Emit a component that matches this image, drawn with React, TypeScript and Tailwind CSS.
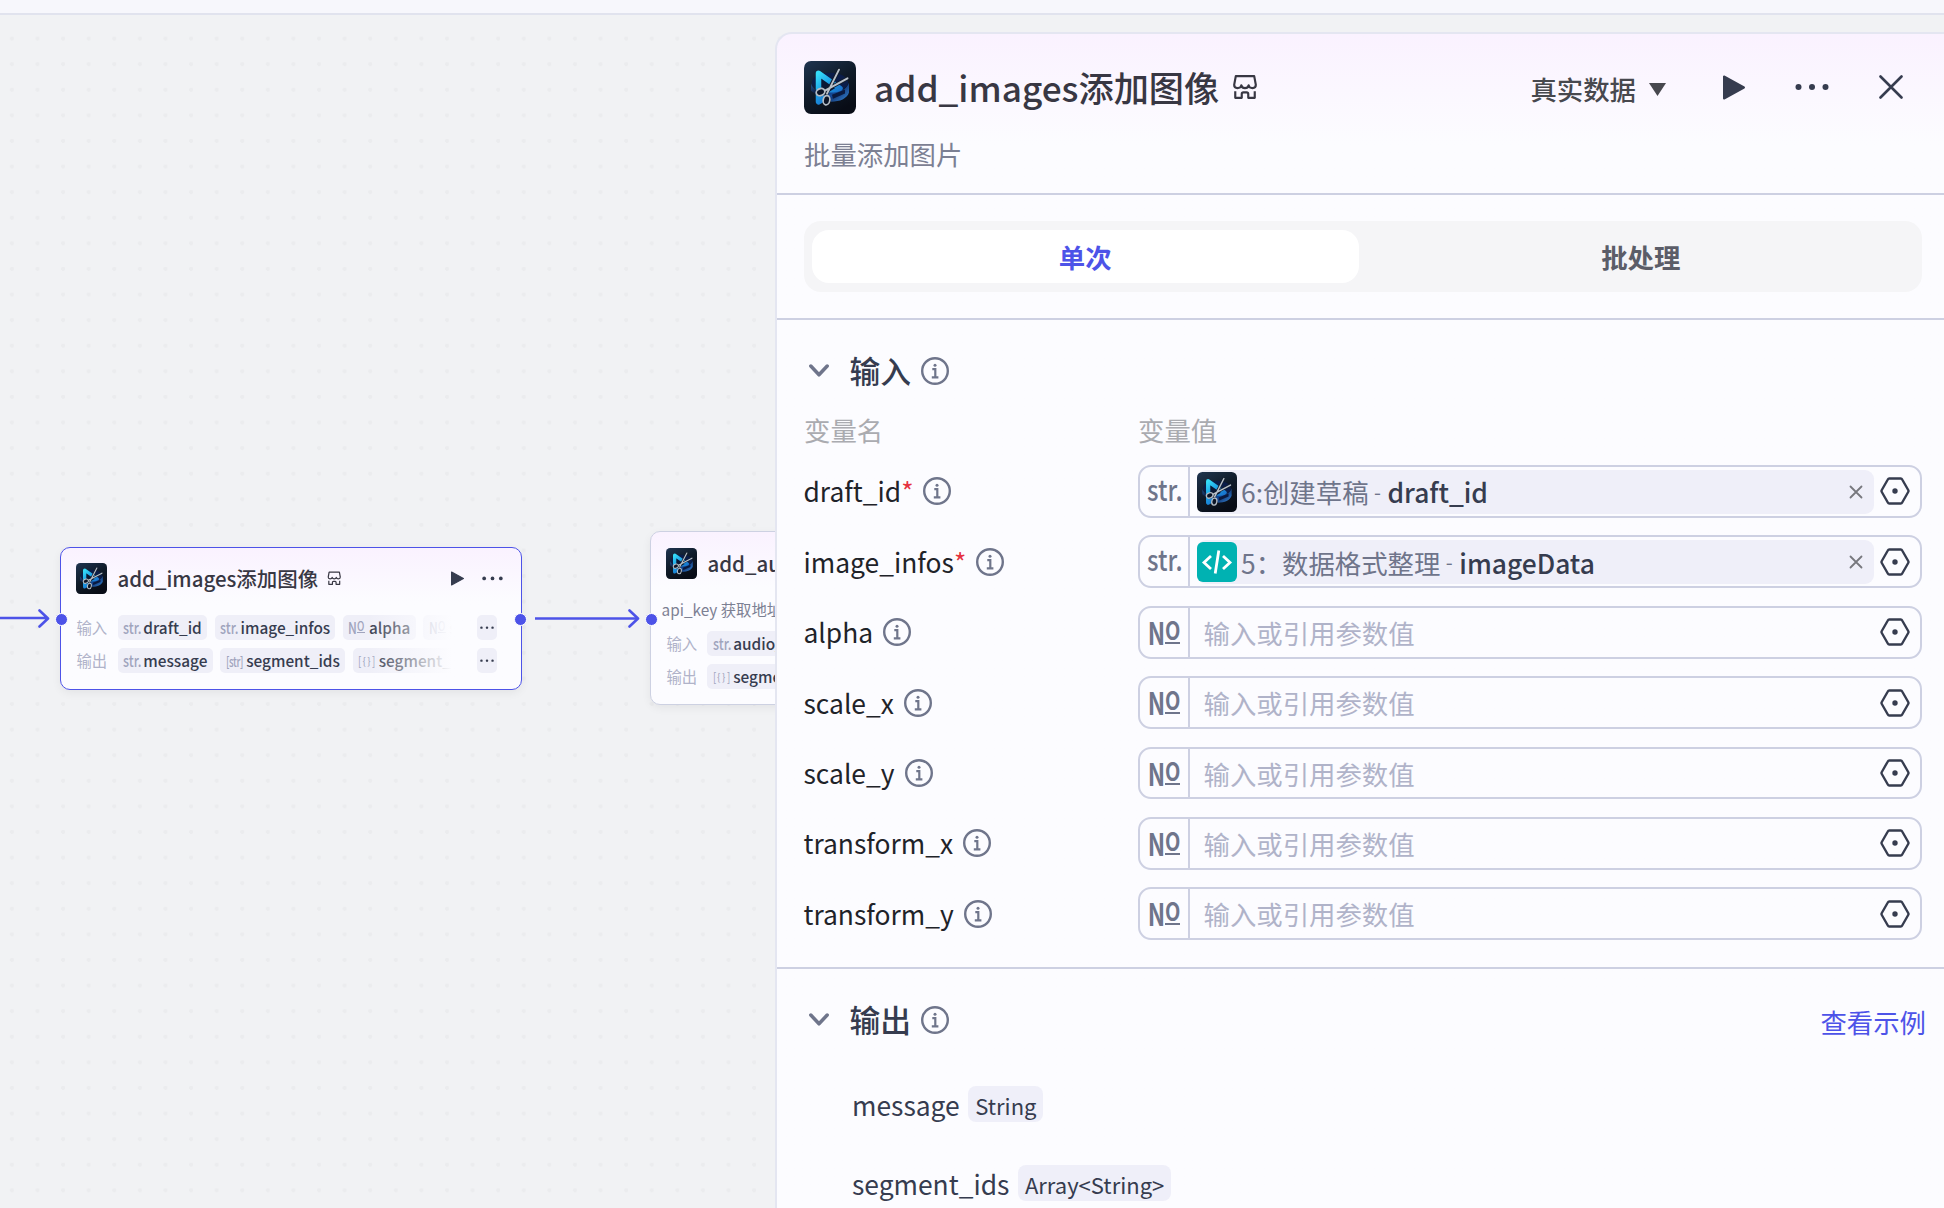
import type { ReactNode } from "react";

type VarType = "str" | "num" | "strArr" | "objArr";

interface Tag {
  type: VarType;
  name: string;
}

interface InputRow {
  name: string;
  type: "str" | "num";
  required?: boolean;
  ref?: { icon: "app" | "code"; node: string; field: string };
}

const INPUTS: InputRow[] = [
  { name: "draft_id", type: "str", required: true, ref: { icon: "app", node: "6:创建草稿", field: "draft_id" } },
  { name: "image_infos", type: "str", required: true, ref: { icon: "code", node: "5：数据格式整理", field: "imageData" } },
  { name: "alpha", type: "num" },
  { name: "scale_x", type: "num" },
  { name: "scale_y", type: "num" },
  { name: "transform_x", type: "num" },
  { name: "transform_y", type: "num" },
];

const OUTPUTS = [
  { name: "message", type: "String" },
  { name: "segment_ids", type: "Array<String>" },
];

function AppIcon({ className }: { className: string }) {
  return (
    <svg viewBox="0 0 52 52" preserveAspectRatio="none" className={className}>
      <defs>
        <linearGradient id="tile" x1="0" y1="0" x2="0.6" y2="1">
          <stop offset="0" stopColor="#1f3550" />
          <stop offset="0.55" stopColor="#0f1a28" />
          <stop offset="1" stopColor="#080c16" />
        </linearGradient>
        <linearGradient id="ring" x1="0" y1="0" x2="1" y2="0.6">
          <stop offset="0" stopColor="#2a63b0" />
          <stop offset="0.3" stopColor="#0c2350" />
          <stop offset="0.7" stopColor="#123a86" />
          <stop offset="1" stopColor="#2f7fd8" />
        </linearGradient>
        <linearGradient id="tri" x1="0" y1="0" x2="0.7" y2="1">
          <stop offset="0" stopColor="#35dcf8" />
          <stop offset="0.45" stopColor="#1c9fe6" />
          <stop offset="1" stopColor="#1766c4" />
        </linearGradient>
      </defs>
      <rect width="52" height="52" rx="7" fill="url(#tile)" />
      <ellipse cx="26" cy="21" rx="18" ry="9.500" fill="#0b1d49" />
      <path d="M14.500 12L36 27 14.500 40z" fill="#0a1734" stroke="url(#tri)" strokeWidth="5.500" strokeLinejoin="round" />
      <path d="M7 22c1 5 8 9 19 9s17-4 19-10v10c-2 6-9 9-18 9l-2-6c-9 0-16-2-18-5z" fill="url(#ring)" opacity="0.8" />
      <path d="M28 33l13-5v4l-12 5z" fill="#0a1a40" />
      <path d="M35 8.500L22 33M43.500 17L19 30" stroke="#131d2b" strokeWidth="3.600" strokeLinecap="round" />
      <path d="M35 8.500L23 32M43.500 17L20 29.500" stroke="#b9c1ca" strokeWidth="1.900" strokeLinecap="round" />
      <ellipse cx="16.500" cy="30.500" rx="4.400" ry="3.400" fill="#0b1426" stroke="#b4bcc4" strokeWidth="1.700" transform="rotate(-20 16.500 30.500)" />
      <ellipse cx="22.500" cy="38.500" rx="3.300" ry="4.600" fill="#0b1426" stroke="#b4bcc4" strokeWidth="1.700" transform="rotate(12 22.500 38.500)" />
    </svg>
  );
}

function CodeIcon({ className }: { className: string }) {
  return (
    <svg viewBox="0 0 40 40" className={className}>
      <rect width="40" height="40" rx="6" fill="#00b2b2" />
      <path d="M14 14l-7 6.500 7 6.500M26 14l7 6.500-7 6.500M21.800 8.500l-3.600 23" fill="none" stroke="#fff" strokeWidth="2.800" />
    </svg>
  );
}

function StoreIcon({ className }: { className: string }) {
  return (
    <svg viewBox="0 0 24 24" fill="none" stroke="#383743" strokeWidth="2" strokeLinejoin="round" className={className}>
      <path d="M3.500 2h17l1.500 8c0 2-1.200 3-3 3s-3.300-1-3.600-2.500C15 12 13.600 13 12 13s-3-1-3.400-2.500C8.300 12 6.800 13 5 13s-3-1-3-3z" />
      <path d="M3 16v6h6v-3.500c0-1 .8-1.500 1.500-1.500h3c.7 0 1.500.5 1.500 1.500V22h6v-6" />
    </svg>
  );
}

function PlayIcon({ className }: { className: string }) {
  return (
    <svg viewBox="0 0 22 25" className={className}>
      <path d="M1 1.500v22L21 12.500z" fill="#363c4f" stroke="#363c4f" strokeWidth="2" strokeLinejoin="round" />
    </svg>
  );
}

function DotsIcon({ className }: { className: string }) {
  return (
    <svg viewBox="0 0 34 8" fill="#363c4f" className={className}>
      <circle cx="3.500" cy="4" r="3" />
      <circle cx="17" cy="4" r="3" />
      <circle cx="30.500" cy="4" r="3" />
    </svg>
  );
}

function InfoIcon() {
  return (
    <svg viewBox="0 0 28 28" fill="none" stroke="#6f758b" className="h-7 w-7 shrink-0">
      <circle cx="14" cy="14" r="12.800" strokeWidth="2.400" />
      <path d="M11.300 12.200h3v8M10.800 20.400h6.600" strokeWidth="2.200" />
      <circle cx="14" cy="8.300" r="1.500" fill="#6f758b" stroke="none" />
    </svg>
  );
}

function HexIcon() {
  return (
    <svg viewBox="0 0 30 28" className="h-7 w-[30px] shrink-0">
      <path
        d="M9.300 1.500h11.400q1 0 1.500 1l6 10.500q.6 1 0 2l-6 10.500q-.5 1-1.500 1H9.300q-1 0-1.500-1l-6-10.500q-.6-1 0-2l6-10.500q.5-1 1.500-1z"
        fill="none"
        stroke="#363c4f"
        strokeWidth="2.400"
      />
      <circle cx="15" cy="14" r="2.700" fill="#363c4f" />
    </svg>
  );
}

function Chevron() {
  return (
    <svg viewBox="0 0 20 14" className="h-[14px] w-5">
      <path d="M1.800 2L10 10.800 18.200 2" fill="none" stroke="#6f758b" strokeWidth="3.500" strokeLinecap="round" strokeLinejoin="round" />
    </svg>
  );
}

// Small type prefix inside a canvas tag
function TypeMark({ type }: { type: VarType }) {
  if (type === "num") {
    return (
      <span className="flex h-[18px] w-[17px] items-start font-medium text-[#a0a4bd]">
        <span className="w-[9px] origin-left scale-x-75 text-[16px] leading-[18px]">N</span>
        <span className="mt-[2px] flex h-[13px] items-start border-b border-[#a0a4bd] text-[13px] leading-[11px]">
          <span className="w-[8px] origin-left scale-x-75">O</span>
        </span>
      </span>
    );
  }
  if (type === "str") {
    return (
      <span className="w-[17px] text-[#a0a4bd]">
        <span className="inline-block origin-left scale-x-[0.78] text-[16px] font-medium leading-[22px]">str.</span>
      </span>
    );
  }
  if (type === "strArr") {
    return (
      <span className="w-[17px] whitespace-nowrap font-medium text-[#a0a4bd]">
        <span className="inline-block origin-left scale-x-[0.68] text-[14px] leading-[22px] tracking-[-0.5px]">[str]</span>
      </span>
    );
  }
  return (
    <span className="flex h-[22px] w-[17px] items-center justify-between text-[13px] leading-[20px] text-[#a0a4bd]">
      <span className="w-[3px] origin-left scale-x-75">[</span>
      <span className="text-[10px]">{"{"}</span>
      <span className="text-[10px]">{"}"}</span>
      <span className="w-[3px] origin-left scale-x-75">]</span>
    </span>
  );
}

function NodeRow({ label, tags, more }: { label: string; tags: Tag[]; more?: boolean }) {
  return (
    <div className="flex h-[25.6px] items-center text-[15.36px]">
      <span className="w-[41px] shrink-0 text-[#b0b3c9]">{label}</span>
      <div className="relative flex h-full w-[352px] shrink-0 gap-[7.68px] overflow-hidden">
        {tags.map((t, i) => (
          <span
            key={i}
            className="flex h-full shrink-0 items-center gap-[3.500px] rounded-[5px] bg-[#efeff8] px-[5.300px] leading-[25.6px] text-[#363c4f]"
          >
            <TypeMark type={t.type} />
            <span className="font-medium">{t.name}</span>
          </span>
        ))}
        {more && <div className="absolute inset-y-0 left-[250px] right-0 bg-linear-to-r from-[#fcfcff]/0 via-[#fcfcff] via-[84px] to-[#fcfcff]" />}
      </div>
      {more && (
        <span className="ml-[7px] flex h-full w-[20.500px] shrink-0 items-center justify-center rounded-[5px] bg-[#efeff8]">
          <DotsIcon className="w-[14px]" />
        </span>
      )}
    </div>
  );
}

function Port({ className }: { className: string }) {
  return <span className={`absolute h-[13px] w-[13px] rounded-full border border-white bg-[#4d53e8] ${className}`} />;
}

function Canvas() {
  return (
    <div className="relative w-[775px] shrink-0 overflow-hidden">
      {/* Edges between nodes */}
      <svg className="absolute left-0 top-0 h-full w-full" fill="none" stroke="#4d53e8" strokeLinecap="round" strokeLinejoin="round">
        <path d="M0 603H46M39.500 595.500l8.500 8-8.500 8M629.500 595.500l8.500 8-8.500 8" strokeWidth="2.600" />
        <path d="M535 603.500H637" strokeWidth="2.600" strokeLinecap="butt" />
      </svg>

      <div className="absolute left-[60px] top-[532px] h-[143px] w-[462px] rounded-[10px] border border-[#4d53e8] bg-[#fcfcff] bg-linear-to-b from-[#faf2ff] to-[#fcfcff] to-[55px] shadow-[0_3px_10px_rgba(0,0,0,0.06)]">
        <div className="mt-[15px] flex h-[31px] items-center pl-[15.400px] pr-[18px]">
          <AppIcon className="h-[31px] w-[31px]" />
          <span className="ml-[10px] text-[20.48px] font-medium text-[#383743]">add_images添加图像</span>
          <StoreIcon className="ml-[9px] h-[14.500px] w-[14.500px]" />
          <PlayIcon className="ml-auto h-[15px] w-[13px]" />
          <DotsIcon className="ml-[18px] w-[21px]" />
        </div>
        <div className="mt-[20.500px] flex flex-col gap-[7.700px] pl-[15.500px]">
          <NodeRow
            label="输入"
            more
            tags={[
              { type: "str", name: "draft_id" },
              { type: "str", name: "image_infos" },
              { type: "num", name: "alpha" },
              { type: "num", name: "scale_x" },
            ]}
          />
          <NodeRow
            label="输出"
            more
            tags={[
              { type: "str", name: "message" },
              { type: "strArr", name: "segment_ids" },
              { type: "objArr", name: "segment_infos" },
            ]}
          />
        </div>
        <Port className="-left-[6.500px] top-[65px]" />
        <Port className="-right-[6px] top-[65px]" />
      </div>

      <div className="absolute left-[650px] top-[516px] h-[174px] w-[462px] rounded-[10px] border border-[#cdd1e2] bg-[#fcfcff] bg-linear-to-b from-[#faf2ff] to-[#fcfcff] to-[55px] shadow-[0_3px_10px_rgba(0,0,0,0.06)]">
        <div className="mt-[16px] flex h-[31px] items-center pl-[15.400px]">
          <AppIcon className="h-[31px] w-[31px]" />
          <span className="ml-[10px] text-[20.48px] font-medium text-[#383743]">add_audios</span>
        </div>
        <p className="mt-[18px] whitespace-nowrap pl-[10.500px] text-[15.36px] leading-[24px] text-[#7c8093]">api_key 获取地址</p>
        <div className="mt-[9.500px] flex flex-col gap-[7.700px] pl-[15.400px]">
          <NodeRow label="输入" tags={[{ type: "str", name: "audio_infos" }]} />
          <NodeRow label="输出" tags={[{ type: "objArr", name: "segment_ids" }]} />
        </div>
        <Port className="-left-[6.500px] top-[81px]" />
      </div>
    </div>
  );
}

function SectionTitle({ children }: { children: ReactNode }) {
  return (
    <div className="flex h-10 items-center pl-[5px]">
      <Chevron />
      <span className="-mt-[2px] ml-[20.500px] mr-[10px] text-[30.8px] font-medium leading-10 text-[#363c4f]">{children}</span>
      <InfoIcon />
    </div>
  );
}

function TypeCell({ type }: { type: "str" | "num" }) {
  return (
    <div className="flex w-[50px] shrink-0 items-start border-r-2 border-[#cdd0e2] pl-[7px] text-[#6f758b]">
      {type === "str" ? (
        <span className="origin-left scale-x-[0.84] text-[28.5px] font-medium leading-[44px]">str.</span>
      ) : (
        <span className="flex pt-[11px] font-bold">
          <span className="w-[18px] origin-left scale-x-[0.75] pl-[1px] text-[31px] leading-[25px]">N</span>
          <span className="flex h-[25px] w-[15px] border-b-2 border-[#6f758b] text-[25px] leading-[20px]">
            <span className="origin-left scale-x-[0.8]">O</span>
          </span>
        </span>
      )}
    </div>
  );
}

function FieldRow({ row }: { row: InputRow }) {
  return (
    <div className="flex h-[52.8px] items-center">
      <div className="flex w-[334px] shrink-0 items-center text-[26.4px] text-[#1f2329]">
        <span className="-ml-[0.500px] leading-[40px]">{row.name}</span>
        {row.required && <span className="leading-[40px] text-[#e53241]">*</span>}
        <span className="ml-[10px]">
          <InfoIcon />
        </span>
      </div>
      <div className="flex h-full w-[784px] rounded-[13px] border-2 border-[#cdd0e2] text-[26.4px]">
        <TypeCell type={row.type} />
        {row.ref ? (
          <div className="ml-[7px] mt-[3px] flex h-[44px] w-[677px] items-center rounded-[9px] bg-[#efeff9]">
            {row.ref.icon === "app" ? <AppIcon className="h-10 w-10" /> : <CodeIcon className="h-10 w-10" />}
            <span className="ml-1 text-[#6f758b]">{row.ref.node}</span>
            <span className="mx-px whitespace-pre text-[20px] text-[#6f758b]"> - </span>
            <span className="ml-px font-medium text-[#363c4f]">{row.ref.field}</span>
            <svg viewBox="0 0 12 12" className="ml-auto mr-[12px] h-3 w-3 overflow-visible" stroke="#77787e" strokeWidth="1.800" strokeLinecap="round">
              <path d="M.5.5l11 11M11.500.5l-11 11" />
            </svg>
          </div>
        ) : (
          <span className="pl-[13.500px] leading-[50px] text-[#b0b3c9]">输入或引用参数值</span>
        )}
        <div className="ml-auto mr-[10px] flex items-center">
          <HexIcon />
        </div>
      </div>
    </div>
  );
}

function Panel() {
  return (
    <div className="mt-[17px] flex flex-1 flex-col rounded-tl-[17px] border-l-2 border-t-2 border-[#e4e6f1] bg-[#fcfcff] bg-linear-to-b from-[#faf2ff] to-[#fcfcff] to-[110px]">
      {/* Header */}
      <div className="h-[161px] shrink-0 border-b-2 border-[#cdd0e2] pl-[27px]">
        <div className="mt-[27px] flex h-[52px] items-center">
          <AppIcon className="h-[53px] w-[52px] shrink-0" />
          <span className="ml-[18px] text-[35.2px] font-medium leading-[52px] text-[#383743]">add_images添加图像</span>
          <StoreIcon className="ml-[13px] h-[26px] w-[26px]" />
          <span className="ml-auto mt-[3px] text-[26.4px] font-medium text-[#47484e]">真实数据</span>
          <svg viewBox="0 0 17 13" className="ml-[13px] mt-[5px] h-[13px] w-[17px]">
            <path d="M0 0h17L8.500 13z" fill="#47484e" />
          </svg>
          <PlayIcon className="ml-[57px] h-[25px] w-[22px]" />
          <DotsIcon className="ml-[50px] w-[34px]" />
          <svg viewBox="0 0 24 24" className="ml-[49.500px] mr-[41.500px] h-6 w-6" stroke="#363c4f" strokeWidth="2.600" strokeLinecap="round">
            <path d="M1.500 1.500l21 21M22.500 1.500l-21 21" />
          </svg>
        </div>
        <p className="mt-[21px] text-[26.4px] leading-[40px] text-[#7c8093]">批量添加图片</p>
      </div>

      {/* Mode switch */}
      <div className="h-[125px] shrink-0 border-b-2 border-[#cdd0e2] pl-[27px] pr-[22px] pt-[26px]">
        <div className="flex h-[71px] gap-[9px] rounded-[17px] bg-[#f5f5f7] px-2 py-[9px] text-[26.4px] font-bold leading-[53px]">
          <button className="flex-1 rounded-[17px] bg-white text-[#4d53e8]">单次</button>
          <button className="flex-1 rounded-[17px] text-[#5b5d68]">批处理</button>
        </div>
      </div>

      {/* Inputs */}
      <div className="h-[649px] shrink-0 border-b-2 border-[#cdd0e2] pl-[27px] pt-[31px]">
        <SectionTitle>输入</SectionTitle>
        <div className="mt-[19px] flex text-[26.4px] leading-[40px] text-[#aaabb0]">
          <span className="w-[334px]">变量名</span>
          <span>变量值</span>
        </div>
        <div className="mt-[15px] flex flex-col gap-[17.6px]">
          {INPUTS.map((row) => (
            <FieldRow key={row.name} row={row} />
          ))}
        </div>
      </div>

      {/* Outputs */}
      <div className="pl-[27px] pt-[31px]">
        <div className="flex h-[44px] justify-between pr-[18px]">
          <SectionTitle>输出</SectionTitle>
          <a className="mt-[2px] text-[26.4px] leading-[40px] text-[#4d53e8]">查看示例</a>
        </div>
        <div className="mt-[41px] flex flex-col gap-[39px] pl-[48px]">
          {OUTPUTS.map((o) => (
            <div key={o.name} className="flex h-10 items-center gap-[8.500px] text-[#363c4f]">
              <span className="text-[26.4px] leading-10">{o.name}</span>
              <span className="-mt-[2px] h-9 rounded-[8px] bg-[#efeff9] px-[7px] text-[22px] leading-[38px]">{o.type}</span>
            </div>
          ))}
        </div>
      </div>
    </div>
  );
}

export default function App() {
  return (
    <div className="flex h-[1208px] w-[1944px] flex-col overflow-hidden bg-[#f1f2f4] font-['Noto_Sans_CJK_SC',sans-serif]">
      <div className="h-[15px] shrink-0 border-b-2 border-[#e1e3ee] bg-[#f7f7fc]" />
      <div className="flex min-h-0 flex-1 bg-[radial-gradient(circle_at_12px_23.500px,#ebecee_1.800px,transparent_2.300px)] bg-size-[25.6px_25.6px]">
        <Canvas />
        <Panel />
      </div>
    </div>
  );
}
